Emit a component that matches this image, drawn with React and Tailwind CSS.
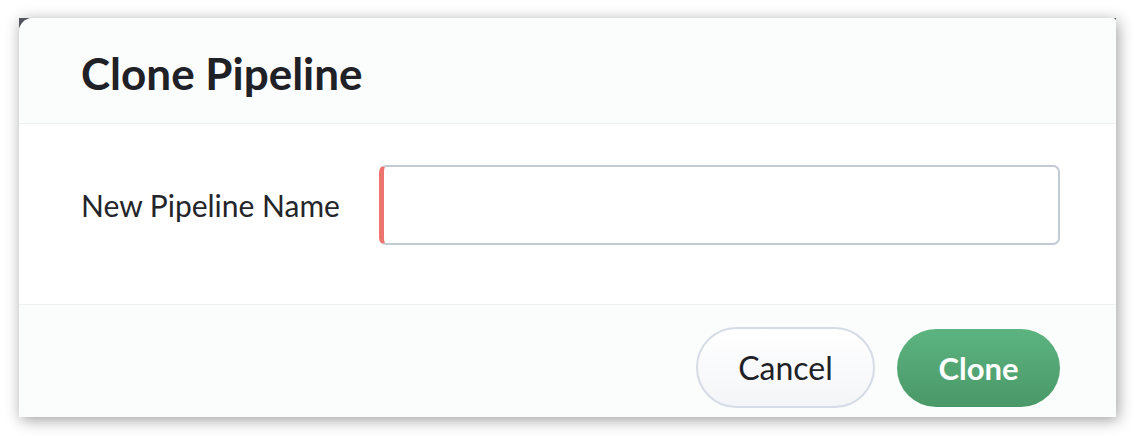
import React, { useState } from 'react';

function ClonePipelineDialog() {
    const [name, setName] = useState("");

    return (
        <div className="w-[1097px] h-[399px] bg-[#54565d] shadow-[2px_3px_14px_rgba(0,0,0,0.38)]">
            <div className="h-full w-full flex flex-col bg-white rounded-tl-[14px] rounded-tr-[4px] overflow-hidden">
                {/* Header */}
                <div className="h-[106px] flex items-center pl-[62px] pt-[4px] bg-[#fbfcfc] border-b border-[#eef0f4]">
                    <h1 className="text-[44px] font-bold text-[#202126] leading-none">Clone Pipeline</h1>
                </div>

                {/* Body */}
                <div className="h-[181px] flex items-start pt-[41px] pl-[62px] pr-[56px] bg-white border-b border-[#eef0f4]">
                    <label className="w-[298px] h-[80px] flex items-center text-[30px] text-[#24252a]">
                        New Pipeline Name
                    </label>
                    <input
                        value={name}
                        onChange={(e) => setName(e.target.value)}
                        className="w-[681px] h-[80px] rounded-[7px] border-2 border-[#c2cad4] border-l-[5px] border-l-[#ee746f] outline-none px-4 text-[30px]"
                    />
                </div>

                {/* Footer */}
                <div className="flex-1 flex justify-end items-start gap-[22px] pt-[22px] pr-[56px] bg-[#fbfcfc]">
                    <button className="w-[179px] h-[81px] rounded-full border-2 border-[#d6dce5] bg-gradient-to-b from-white to-[#f4f5f8] text-[32px] text-[#202126]">
                        Cancel
                    </button>
                    <button className="w-[163px] h-[78px] mt-[2px] rounded-full bg-gradient-to-b from-[#5cb480] to-[#4a9868] text-[31px] font-bold text-white">
                        Clone
                    </button>
                </div>
            </div>
        </div>
    );
}

export default function App() {
    return (
        <div className="w-[1134px] h-[436px] bg-white pt-[18px] pl-[19px] font-['Lato','Liberation_Sans',sans-serif]">
            <ClonePipelineDialog />
        </div>
    );
}
